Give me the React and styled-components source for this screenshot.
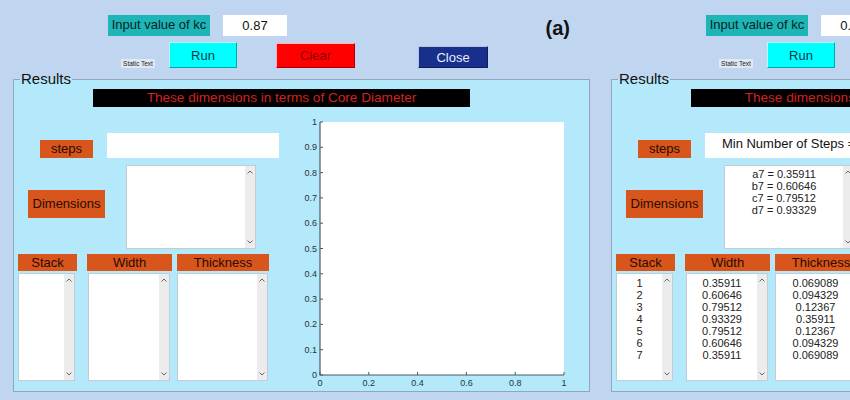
import React from 'react';
import styled, { createGlobalStyle } from 'styled-components';

const GlobalStyle = createGlobalStyle`
  html, body {
    margin: 0;
    padding: 0;
    background: #bfd5f0;
  }
  body {
    font-family: "Liberation Sans", Arial, sans-serif;
  }
`;

const Page = styled.div`
  display: flex;
  width: 850px;
  height: 400px;
  overflow: hidden;
  background: #bfd5f0;
`;

const Window = styled.div`
  flex: 0 0 598px;
  height: 400px;
`;

const TopArea = styled.div`
  height: 70px;
  padding-top: 15px;
  box-sizing: border-box;
`;

const InputRow = styled.div`
  display: flex;
  align-items: center;
  height: 21px;
  padding-left: 108px;
`;

const KcLabel = styled.div`
  width: 102px;
  height: 21px;
  background: #1db5b6;
  color: #062424;
  font-size: 13px;
  line-height: 19px;
  text-align: center;
`;

const KcInput = styled.div`
  width: 64px;
  height: 21px;
  margin-left: 13px;
  background: #fff;
  color: #111;
  font-size: 13px;
  line-height: 21px;
  text-align: center;
`;

const PanelTag = styled.div`
  margin-left: auto;
  margin-right: 28px;
  margin-top: 6px;
  font-size: 20px;
  font-weight: bold;
  color: #111;
`;

const ButtonRow = styled.div`
  display: flex;
  align-items: flex-start;
  height: 26px;
  margin-top: 6px;
`;

const StaticText = styled.div`
  width: 34px;
  height: 9px;
  margin-left: 121px;
  margin-top: 17px;
  background: #dfe8f3;
  color: #222;
  font-size: 6.5px;
  line-height: 9px;
  text-align: center;
`;

const Button = styled.button`
  width: ${(p) => p.$w}px;
  height: ${(p) => p.$h}px;
  margin-left: ${(p) => p.$ml}px;
  margin-top: ${(p) => p.$mt || 0}px;
  padding: 0;
  background: ${(p) => p.$bg};
  color: ${(p) => p.$fg};
  font-family: "Liberation Sans", Arial, sans-serif;
  font-size: 13px;
  border: 1px solid;
  border-color: rgba(255, 255, 255, 0.7) rgba(0, 0, 0, 0.35) rgba(0, 0, 0, 0.35) rgba(255, 255, 255, 0.7);
`;

const Panel = styled.fieldset`
  box-sizing: border-box;
  height: 322px;
  margin: 0 8px 0 13px;
  padding: 1px 0 0 0;
  border: 1px solid #93a7b8;
  background: #b3e9fb;
  min-width: 0;
`;

const Legend = styled.legend`
  margin-left: 6px;
  padding: 0 1px;
  font-size: 15px;
  line-height: 18px;
  color: #111;
`;

const Banner = styled.div`
  width: 377px;
  height: 18px;
  margin-left: 79px;
  background: #000;
  color: #d42020;
  font-size: 13.6px;
  line-height: 18px;
  text-align: center;
  white-space: nowrap;
`;

const Body = styled.div`
  display: flex;
`;

const Controls = styled.div`
  flex: 0 0 276px;
  display: flex;
  flex-direction: column;
  padding-top: 26px;
`;

const StepsRow = styled.div`
  display: flex;
  align-items: flex-end;
  height: 25px;
`;

const OrangeLabel = styled.div`
  width: ${(p) => p.$w}px;
  height: ${(p) => p.$h}px;
  margin-left: ${(p) => p.$ml || 0}px;
  margin-top: ${(p) => p.$mt || 0}px;
  background: #d8561c;
  color: #2b0a00;
  font-size: 13px;
  line-height: ${(p) => p.$h}px;
  text-align: center;
  flex-shrink: 0;
`;

const StepsField = styled.div`
  box-sizing: border-box;
  width: 172px;
  height: 25px;
  margin-left: 14px;
  padding-left: 6px;
  background: #fff;
  color: #111;
  font-size: 13px;
  line-height: 22px;
  text-align: center;
  white-space: nowrap;
  overflow: hidden;
`;

const DimsRow = styled.div`
  display: flex;
  align-items: flex-start;
  height: 84px;
  margin-top: 7px;
`;

const ColumnsRow = styled.div`
  display: flex;
  margin-top: 5px;
  padding-left: 4px;
`;

const Column = styled.div`
  display: flex;
  flex-direction: column;
  gap: 2px;
  margin-left: ${(p) => p.$ml || 0}px;
`;

const ListBox = styled.div`
  box-sizing: border-box;
  display: flex;
  width: ${(p) => p.$w}px;
  height: ${(p) => p.$h}px;
  margin-left: ${(p) => p.$ml || 0}px;
  background: #fff;
  border: 1px solid #c3ccd4;
`;

const ListContent = styled.div`
  flex: 1;
  padding-top: ${(p) => p.$pt || 3}px;
  color: #222;
  font-size: 11px;
  line-height: 12px;
  text-align: center;
  white-space: nowrap;
`;

const ScrollBar = styled.div`
  width: 10px;
  display: flex;
  flex-direction: column;
  justify-content: space-between;
  align-items: center;
  padding: 4px 0;
  background: #ececec;
`;

const Plot = styled.svg`
  display: block;
  flex-shrink: 0;
`;

const Chevron = ({ up }) => (
  <svg width="6" height="4" viewBox="0 0 6 4">
    <path d={up ? 'M0.5 3.5 L3 1 L5.5 3.5' : 'M0.5 0.5 L3 3 L5.5 0.5'} fill="none" stroke="#666" strokeWidth="1" />
  </svg>
);

const List = ({ w, h, ml, pt, lines }) => (
  <ListBox $w={w} $h={h} $ml={ml}>
    <ListContent $pt={pt}>
      {lines.map((l, i) => <div key={i}>{l}</div>)}
    </ListContent>
    <ScrollBar>
      <Chevron up />
      <Chevron />
    </ScrollBar>
  </ListBox>
);

const Axes = () => {
  const left = 30;
  const right = 274;
  const top = 15;
  const bottom = 268;
  const yTicks = [0, 0.1, 0.2, 0.3, 0.4, 0.5, 0.6, 0.7, 0.8, 0.9, 1];
  const xTicks = [0, 0.2, 0.4, 0.6, 0.8, 1];
  const fy = (v) => bottom - v * (bottom - top);
  const fx = (v) => left + v * (right - left);
  return (
    <Plot width="298" height="284">
      <rect x={left} y={top} width={right - left} height={bottom - top} fill="#fff" />
      <path d={`M${left} ${top} V${bottom} H${right}`} fill="none" stroke="#4b5a62" strokeWidth="1.2" />
      {yTicks.map((v) => (
        <g key={v}>
          <line x1={left} x2={left + 3} y1={fy(v)} y2={fy(v)} stroke="#4b5a62" />
          <text x={left - 3} y={fy(v) + 3} fontSize="9" textAnchor="end" fill="#2a3338" fontFamily="Liberation Sans, Arial, sans-serif">{v}</text>
        </g>
      ))}
      {xTicks.map((v) => (
        <g key={v}>
          <line x1={fx(v)} x2={fx(v)} y1={bottom} y2={bottom - 3} stroke="#4b5a62" />
          <text x={fx(v)} y={bottom + 11} fontSize="9" textAnchor="middle" fill="#2a3338" fontFamily="Liberation Sans, Arial, sans-serif">{v}</text>
        </g>
      ))}
    </Plot>
  );
};

const GuiWindow = ({ tag, kc, steps, dims, stack, width, thickness }) => (
  <Window>
    <TopArea>
      <InputRow>
        <KcLabel>Input value of kc</KcLabel>
        <KcInput>{kc}</KcInput>
        <PanelTag>{tag}</PanelTag>
      </InputRow>
      <ButtonRow>
        <StaticText>Static Text</StaticText>
        <Button $w={68} $h={26} $ml={14} $bg="#00ffff" $fg="#083848">Run</Button>
        <Button $w={79} $h={25} $ml={39} $mt={1} $bg="#ff0000" $fg="#8c0000">Clear</Button>
        <Button $w={70} $h={22} $ml={63} $mt={4} $bg="#182f8c" $fg="#e8eeff">Close</Button>
      </ButtonRow>
    </TopArea>
    <Panel>
      <Legend>Results</Legend>
      <Banner>These dimensions in terms of Core Diameter</Banner>
      <Body>
        <Controls>
          <StepsRow>
            <OrangeLabel $w={53} $h={18} $ml={26}>steps</OrangeLabel>
            <StepsField>{steps}</StepsField>
          </StepsRow>
          <DimsRow>
            <OrangeLabel $w={77} $h={28} $ml={14} $mt={25}>Dimensions</OrangeLabel>
            <List w={130} h={84} ml={21} pt={2} lines={dims} />
          </DimsRow>
          <ColumnsRow>
            <Column>
              <OrangeLabel $w={59} $h={17}>Stack</OrangeLabel>
              <List w={57} h={108} lines={stack} />
            </Column>
            <Column $ml={10}>
              <OrangeLabel $w={85} $h={17}>Width</OrangeLabel>
              <List w={82} h={108} ml={1} lines={width} />
            </Column>
            <Column $ml={5}>
              <OrangeLabel $w={92} $h={17}>Thickness</OrangeLabel>
              <List w={91} h={108} lines={thickness} />
            </Column>
          </ColumnsRow>
        </Controls>
        <Axes />
      </Body>
    </Panel>
  </Window>
);

const App = () => (
  <>
    <GlobalStyle />
    <Page>
      <GuiWindow tag="(a)" kc="0.87" steps="" dims={[]} stack={[]} width={[]} thickness={[]} />
      <GuiWindow
        tag="(b)"
        kc="0.87"
        steps="Min Number of Steps = 7"
        dims={['a7 = 0.35911', 'b7 = 0.60646', 'c7 = 0.79512', 'd7 = 0.93329']}
        stack={['1', '2', '3', '4', '5', '6', '7']}
        width={['0.35911', '0.60646', '0.79512', '0.93329', '0.79512', '0.60646', '0.35911']}
        thickness={['0.069089', '0.094329', '0.12367', '0.35911', '0.12367', '0.094329', '0.069089']}
      />
    </Page>
  </>
);

export default App;
